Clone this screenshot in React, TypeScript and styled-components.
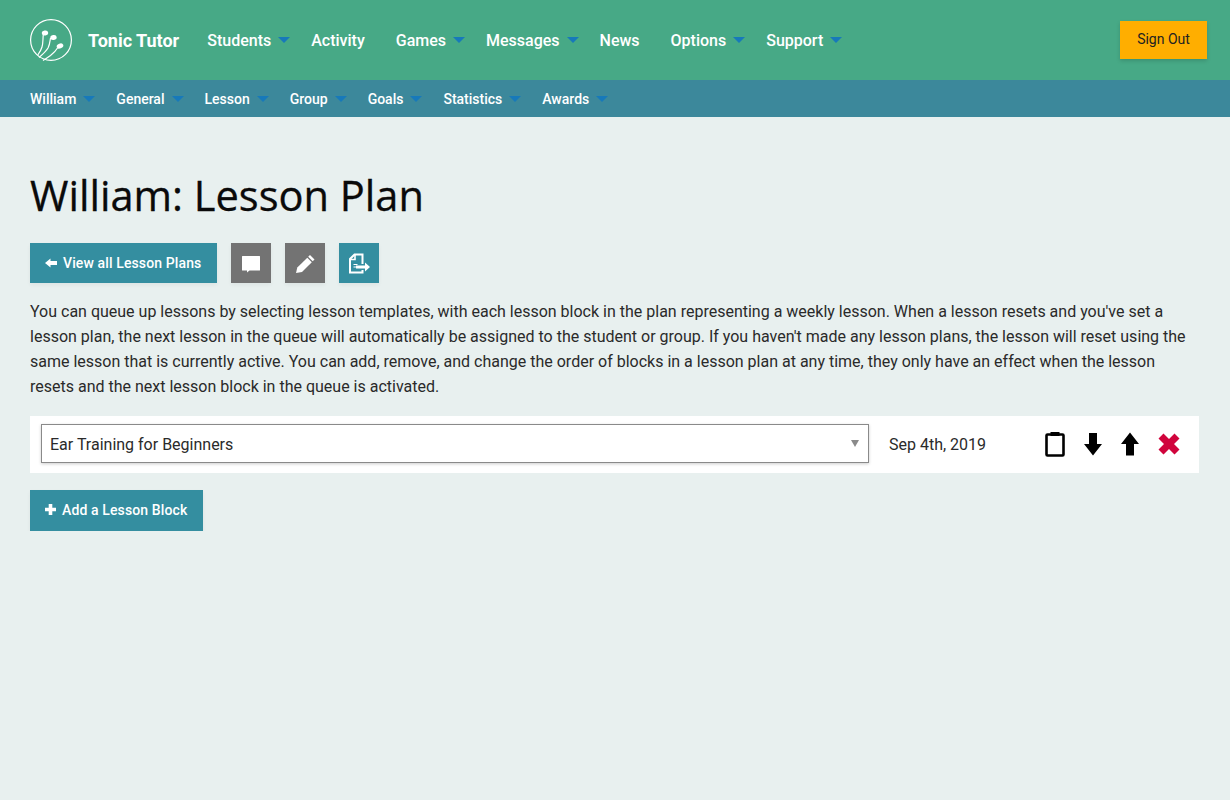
import React from "react";
import styled, { createGlobalStyle } from "styled-components";

const mainNav = [
  { label: "Students", caret: true },
  { label: "Activity", caret: false },
  { label: "Games", caret: true },
  { label: "Messages", caret: true },
  { label: "News", caret: false },
  { label: "Options", caret: true },
  { label: "Support", caret: true },
];
const subNav = ["William", "General", "Lesson", "Group", "Goals", "Statistics", "Awards"];

function Logo() {
  return (
    <svg width="44" height="44" viewBox="0 0 44 44" fill="none" stroke="#fff" strokeWidth="1.2">
      <circle cx="22" cy="22" r="20.4" />
      <path d="M14.500 15c-.8 5-.2 10-1.500 14-.8 3-2.500 5.500-4.200 8" />
      <path d="M21.500 20c-.5 3-.5 6-2.500 10-2 3.500-5.500 6.500-9 9.500" />
      <path d="M28.500 30c-2 3.500-4.500 5.500-7 7.500-2.500 1.800-5 3.500-7.500 5" />
      <ellipse cx="16" cy="15" rx="3.200" ry="2.500" fill="#fff" stroke="none" transform="rotate(-10 16 15)" />
      <ellipse cx="24.500" cy="19.500" rx="3.200" ry="2.500" fill="#fff" stroke="none" transform="rotate(-10 24.500 19.500)" />
      <ellipse cx="31" cy="28" rx="3.400" ry="2.500" fill="#fff" stroke="none" transform="rotate(-20 31 28)" />
    </svg>
  );
}

function App() {
  return (
    <>
      <GlobalStyle />
      <TopBar>
        <LogoBox>
          <Logo />
          <Brand>Tonic Tutor</Brand>
        </LogoBox>
        <MainMenu>
          {mainNav.map((item) => (
            <MainItem key={item.label} $caret={item.caret}>
              {item.label}
              {item.caret && <MainCaret />}
            </MainItem>
          ))}
        </MainMenu>
        <SignOut>Sign Out</SignOut>
      </TopBar>
      <SubBar>
        {subNav.map((label) => (
          <SubItem key={label}>
            {label}
            <SubCaret />
          </SubItem>
        ))}
      </SubBar>
      <Content>
        <Title>William: Lesson Plan</Title>
        <Actions>
          <TextButton>
            <svg width="12" height="10" viewBox="0 0 12 10" fill="#fff">
              <path d="M0 5l5.500-4.500V3H12v4H5.500v2.500z" />
            </svg>
            View all Lesson Plans
          </TextButton>
          <IconButton $grey>
            <svg width="20" height="20" viewBox="0 0 20 20" fill="#fff">
              <path d="M1.500 3h17a.5.5 0 0 1 .5.5v13.500a.5.5 0 0 1-.5.5H8.500l-2.500 2v-2H1.500A.5.5 0 0 1 1 17V3.500a.5.5 0 0 1 .5-.5z" />
            </svg>
          </IconButton>
          <IconButton $grey>
            <svg width="20" height="20" viewBox="0 0 20 20" fill="#fff">
              <path d="M15 2l4.500 4.500-1.800 1.800-4.500-4.500z" />
              <path d="M12.300 4.700l4.500 4.500L7 19l-6 1 1.300-5.500z" />
            </svg>
          </IconButton>
          <IconButton>
            <svg width="22" height="22" viewBox="0 0 22 22" fill="none" stroke="#fff" strokeWidth="2">
              <path d="M14.500 12V2.500H6.500L2 7v13.500h12.500V18" />
              <path d="M7 3v4.500H2.500" strokeWidth="1.600" />
              <path d="M5.500 12.500h4M5.500 15h4" strokeWidth="1.200" />
              <path d="M8 13.500h9V10.500l5 4.500-5 4.500v-3H8z" fill="#fff" stroke="none" />
            </svg>
          </IconButton>
        </Actions>
        <Intro>
          You can queue up lessons by selecting lesson templates, with each lesson block in the plan
          representing a weekly lesson. When a lesson resets and you've set a lesson plan, the next
          lesson in the queue will automatically be assigned to the student or group. If you haven't
          made any lesson plans, the lesson will reset using the same lesson that is currently active.
          You can add, remove, and change the order of blocks in a lesson plan at any time, they only
          have an effect when the lesson resets and the next lesson block in the queue is activated.
        </Intro>
        <BlockRow>
          <SelectBox>
            Ear Training for Beginners
            <SelectCaret />
          </SelectBox>
          <DateText>Sep 4th, 2019</DateText>
          <RowIcons>
            <svg width="20" height="26" viewBox="0 0 20 26" fill="none">
              <rect x="1.500" y="3.500" width="17" height="21" rx="1" stroke="#000" strokeWidth="2.600" />
              <rect x="5.500" y="1" width="9" height="4" fill="#000" />
            </svg>
            <svg width="18" height="24" viewBox="0 0 18 24" fill="#000">
              <path d="M5 1h8v11h5l-9 11.500L0 12h5z" />
            </svg>
            <svg width="18" height="24" viewBox="0 0 18 24" fill="#000">
              <path d="M9 .5L18 12h-5v11.500H5V12H0z" />
            </svg>
            <svg width="22" height="22" viewBox="0 0 22 22" fill="#d0043c">
              <path d="M5.500 0.500L11 6l5.500-5.500 5 5L16 11l5.500 5.500-5 5L11 16l-5.500 5.500-5-5L6 11 .5 5.500z" />
            </svg>
          </RowIcons>
        </BlockRow>
        <AddButton>
          <svg width="11" height="11" viewBox="0 0 11 11" fill="#fff">
            <path d="M3.700 0h3.600v3.700H11v3.600H7.300V11H3.700V7.300H0V3.700h3.700z" />
          </svg>
          Add a Lesson Block
        </AddButton>
      </Content>
    </>
  );
}

const GlobalStyle = createGlobalStyle`
  html, body {
    margin: 0;
    min-height: 100%;
    background: #e8f0ef;
    font-family: Roboto, "Liberation Sans", sans-serif;
    color: #222;
  }
  * {
    box-sizing: border-box;
  }
`;
const TopBar = styled.header`
  display: flex;
  align-items: center;
  height: 80px;
  padding: 0 23px 0 30px;
  background: #47a986;
`;
const LogoBox = styled.div`
  display: flex;
  align-items: center;
  gap: 15px;
  margin-left: -1px;
`;
const Brand = styled.div`
  font-size: 18px;
  font-weight: 700;
  color: #fff;
`;
const MainMenu = styled.nav`
  display: flex;
  margin-left: 28px;
  flex: 1;
`;
const MainItem = styled.a<{ $caret: boolean }>`
  display: flex;
  align-items: center;
  font-size: 16px;
  font-weight: 500;
  color: #fff;
  margin-right: ${(props) => (props.$caret ? "21px" : "31px")};
`;
const MainCaret = styled.span`
  width: 0;
  height: 0;
  margin-left: 7px;
  border-left: 6px solid transparent;
  border-right: 6px solid transparent;
  border-top: 6px solid #1779ba;
`;
const SignOut = styled.button`
  width: 87px;
  height: 38px;
  padding: 0 0 2px;
  border: 0;
  background: #ffae00;
  color: #222;
  font: 400 14px Roboto, sans-serif;
  box-shadow: 0 2px 4px rgba(0, 0, 0, 0.15);
`;
const SubBar = styled.nav`
  display: flex;
  align-items: center;
  height: 37px;
  padding-left: 30px;
  background: #3c889b;
`;
const SubItem = styled.a`
  display: flex;
  align-items: center;
  margin-right: 21px;
  font-size: 14px;
  font-weight: 500;
  color: #fff;
`;
const SubCaret = styled.span`
  width: 0;
  height: 0;
  margin-left: 7px;
  border-left: 6px solid transparent;
  border-right: 6px solid transparent;
  border-top: 6px solid #1779ba;
`;
const Content = styled.main`
  padding: 0 31px 0 30px;
`;
const Title = styled.h1`
  margin: 52px 0 22px;
  font-family: "Open Sans", sans-serif;
  font-size: 41.6px;
  font-weight: 400;
  line-height: 52px;
  color: #0a0a0a;
  -webkit-text-stroke: 0.3px #0a0a0a;
`;
const Actions = styled.div`
  display: flex;
  gap: 14px;
`;
const TextButton = styled.button`
  display: flex;
  align-items: center;
  gap: 6px;
  height: 40px;
  padding: 0 16px 0 15px;
  border: 0;
  background: #348ea0;
  color: #fff;
  font: 500 14px Roboto, sans-serif;
  letter-spacing: 0.12px;
  box-shadow: 0 2px 4px rgba(0, 0, 0, 0.05);
`;
const AddButton = styled(TextButton)`
  height: 41px;
  margin-top: 17px;
  padding-bottom: 2px;
`;
const IconButton = styled.button<{ $grey?: boolean }>`
  display: flex;
  align-items: center;
  justify-content: center;
  width: 40px;
  height: 40px;
  padding: 0;
  border: 0;
  background: ${(props) => (props.$grey ? "#737373" : "#348ea0")};
  box-shadow: 0 2px 4px rgba(0, 0, 0, 0.05);
`;
const Intro = styled.p`
  margin: 16px 0 17px;
  font-size: 16px;
  line-height: 25px;
  color: #2a2a2a;
`;
const BlockRow = styled.div`
  display: flex;
  align-items: center;
  height: 57px;
  padding: 0 19px 2px 11px;
  background: #fff;
`;
const SelectBox = styled.div`
  position: relative;
  display: flex;
  align-items: center;
  width: 828px;
  height: 39px;
  padding: 1px 0 0 8px;
  border: 1px solid #8a8a8a;
  font-size: 16px;
  color: #2a2a2a;
  box-shadow: 0 1px 3px rgba(0, 0, 0, 0.2);
`;
const SelectCaret = styled.span`
  position: absolute;
  right: 9px;
  top: 15px;
  width: 0;
  height: 0;
  border-left: 4px solid transparent;
  border-right: 4px solid transparent;
  border-top: 7px solid #8a8a8a;
`;
const DateText = styled.div`
  margin: 2px 0 0 20px;
  font-size: 16px;
  color: #2a2a2a;
`;
const RowIcons = styled.div`
  display: flex;
  align-items: center;
  gap: 19px;
  margin-left: auto;
`;

export default App;
